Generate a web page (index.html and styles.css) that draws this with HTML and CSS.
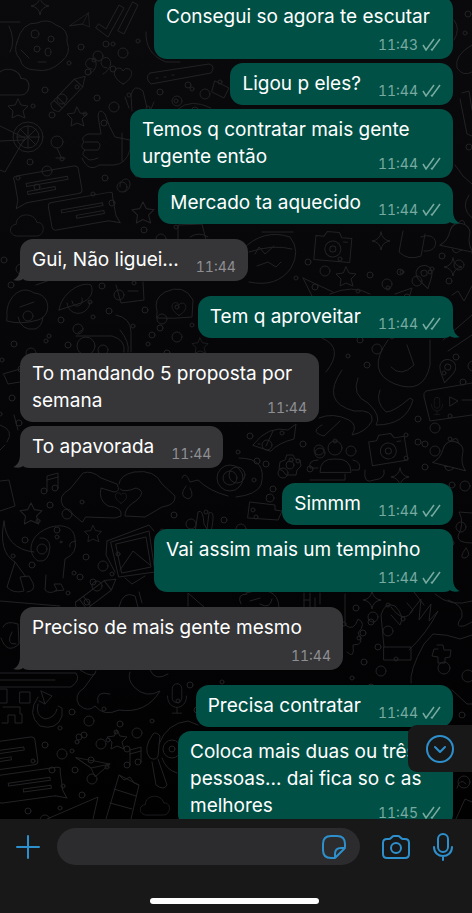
FILE: index.html
```html
<!DOCTYPE html>
<html lang="pt-BR">
<head>
<meta charset="utf-8">
<meta name="viewport" content="width=device-width, initial-scale=1">
<title>Conversa</title>
<link rel="stylesheet" href="styles.css">
</head>
<body>
<svg class="defs" aria-hidden="true">
  <defs>
    <symbol id="ticks" viewBox="0 0 19 13"><path d="M1 7l3 5L12 1M9 11l1 1L18 1"/></symbol>
    <symbol id="tail-out" viewBox="0 0 20 16"><path d="M0 0H13V3C13 9 16 14 20 15C16 16 12 16 10 14C8 16 5 16 0 16Z"/></symbol>
    <symbol id="tail-in" viewBox="0 0 20 16"><path d="M20 0H7V3C7 9 4 14 0 15C4 16 8 16 10 14C12 16 15 16 20 16Z"/></symbol>
    <g id="star"><path d="M0-10L3-4L10-3L5 2L7 9L0 6L-6 9L-5 2L-10-3L-3-4Z"/></g>
    <g id="spark"><path d="M0-9Q1-1 9 0Q1 1 0 9Q-1 1-9 0Q-1-1 0-9Z"/></g>
    <g id="heart"><path d="M0 8C-12 1-10-8-4-8Q-1-8 0-5Q2-9 6-7C12-4 7 5 0 8Z"/></g>
    <g id="cloud"><path d="M-12 10C-22 8-19-3-12-3C-12-16 8-17 11-5C21-6 20 10 11 10Z"/></g>
    <g id="plane"><path d="M-17-8L17 0L2 16L-2 5ZM-2 5L17 0M-2 5L-17-8"/></g>
    <g id="camera"><path d="M-18-10H-10L-7-15H5L8-10H18V14H-18ZM10-6H14"/><circle r="8" cy="2"/><circle r="3" cy="2"/></g>
    <g id="bell"><path d="M-17 12Q-10 6-10-4C-10-17 10-17 10-4Q10 6 17 12ZM-3-14Q0-20 3-14M-5 12Q0 20 5 12"/></g>
    <g id="pin"><path d="M0 12C-4 5-8 1-8-4C-8-14 8-14 8-4C8 1 4 5 0 12Z"/><circle r="3" cy="-4"/></g>
    <g id="note"><path d="M-4 7V-8L7-11V4M-4-4L7-7"/><circle cx="-7" cy="7" r="3"/><circle cx="4" cy="4" r="3"/></g>
    <g id="chat"><path d="M-31-12Q-33-16-28-16H30Q34-16 34-12V8Q34 12 30 12H-23L-34 16L-31 8ZM-20-7H22V-4H-20ZM-20 1H8V4H-20Z"/></g>
    <g id="crayon"><path d="M-6-16L0-26L6-16V20Q0 25-6 20ZM-6-16H6M-6 10H6M-6 15H6"/></g>
    <g id="mic"><rect x="-5" y="-14" width="10" height="20" rx="5"/><path d="M-10-1C-10 15 10 15 10-1M0 11V17M-5 17H5"/></g>
    <g id="drops"><circle r="3"/><circle cx="17" cy="9" r="5"/><circle cx="-12" cy="16" r="2"/><circle cx="7" cy="25" r="3"/><circle cx="32" cy="-3" r="2"/></g>
  </defs>
</svg>

<div class="app">
  <main class="chat">
    <svg class="wallpaper" viewBox="0 0 472 819" preserveAspectRatio="xMidYMid slice" aria-hidden="true">
      <path d="M17 42Q22 22 37 23Q48 18 56 25Q69 29 67 42Q72 53 61 62Q49 73 36 70Q22 70 20 59Q13 52 17 42Z"/>
      <circle cx="35" cy="34" r="4"/><circle cx="51" cy="39" r="3"/><circle cx="37" cy="49" r="3"/><ellipse cx="48" cy="52" rx="3" ry="4"/><path d="M21 50L29 58M38 62H46M0 22H20M9 26Q16 41 10 52"/>
      <path d="M96 28L108 37L124 8L119 5L106 29L99 24ZM118 31L124 34L138 5L133 2Z"/>
      <use href="#plane" transform="translate(81 21) rotate(-48) scale(.65)"/>
      <path d="M92 69C81 68 86 56 93 59C100 63 94 73 88 75M107 68C97 67 101 55 108 58C114 62 109 71 103 74"/>
      <use href="#heart" x="123" y="76"/><use href="#cloud" transform="translate(9 84) scale(1.1)"/>
      <use href="#crayon" transform="translate(68 94) rotate(44) scale(.95)"/>
      <use href="#star" x="18" y="109"/><use href="#star" x="77" y="117"/><use href="#spark" x="40" y="6"/>
      <circle cx="28" cy="137" r="15"/><circle cx="28" cy="137" r="11"/><path d="M17 137H39M28 126V148M20 129L36 145M36 129L20 145M0 126L25 138L5 172L0 170M0 141L24 140"/>
      <circle cx="57" cy="142" r="6"/><path d="M57 148L61 157M56 158H65"/>
      <path d="M82 158C86 168 93 170 99 165H114Q126 164 130 150V140L115 137Q109 127 105 114Q99 107 98 116L101 134H88Q80 137 84 142Q79 147 85 150Q80 155 87 158Q88 162 98 158M85 142H98Q102 145 98 150H85M122 133V161"/>
      <path d="M129 108L125 97M132 111L131 95Q134 83 143 91L147 108M151 109L154 102"/>
      <use href="#chat" transform="translate(47 187) rotate(-10)"/><use href="#chat" transform="translate(84 213) rotate(-10) scale(-1 1)"/>
      <use href="#cloud" transform="translate(27 227) scale(.9)"/><use href="#star" transform="translate(143 213) scale(1.1)"/>
      <path d="M146 32Q145 54 166 62L180 62M150 73L209 64Q216 66 211 73L151 84Q144 78 150 73M156 78H158M164 77H166M172 75H174M215 81L229 88L224 98L212 92ZM178 109Q191 98 211 108"/>
      <path d="M120 187C119 178 130 176 130 184Q130 190 124 192M178 240V225L202 224L206 240M190 237Q199 231 208 237"/>
      <g><use href="#drops" x="81" y="47"/><use href="#drops" x="45" y="90"/><use href="#drops" x="97" y="98"/><use href="#drops" x="160" y="92"/><use href="#drops" x="188" y="85"/><use href="#drops" x="105" y="178"/><use href="#drops" x="106" y="44"/><use href="#drops" x="30" y="162"/><use href="#drops" x="144" y="230"/></g>
      <path d="M454 20Q461 29 454 40M472 45Q454 55 457 68Q463 77 472 72M462 93L469 91L472 110M460 99L467 134L472 136M455 165L463 176L472 184M469 195Q460 208 472 218"/>
      <circle cx="468" cy="14" r="3"/><circle cx="465" cy="33" r="2"/><circle cx="469" cy="147" r="3"/>
      <path d="M242 250Q263 228 290 237Q301 251 291 268Q277 288 249 282M249 252Q273 244 292 249M255 254L259 247L265 254L274 246M257 266L268 262L276 267L281 262"/>
      <use href="#camera" transform="translate(333 247) rotate(5)"/><use href="#spark" x="381" y="241"/><path d="M403 231L399 252Q408 261 421 256L425 234M421 237C439 230 441 253 424 251M262 232H293"/>
      <use href="#bell" transform="translate(459 237) rotate(12)"/><use href="#spark" x="453" y="267"/><use href="#pin" transform="translate(425 277) rotate(-14)"/><use href="#star" x="346" y="277"/>
      <path d="M303 278L333 292M303 278L312 296M330 294Q353 284 370 294M395 294L412 288L409 298M452 295L458 291L464 301L472 286M443 340L472 315M448 351L472 335"/>
      <g><use href="#drops" x="308" y="262"/><use href="#drops" x="370" y="275"/><use href="#drops" x="400" y="272"/><use href="#drops" x="442" y="256"/><use href="#drops" x="360" y="340"/></g>
      <path d="M7 316C5 300 20 283 34 293C51 294 52 316 38 320Q21 325 7 321ZM18 317Q21 331 35 329Q42 327 43 317M59 310C61 294 80 281 91 285C94 292 91 299 81 303L59 310M67 303C69 318 89 316 90 302M72 301C74 310 84 306 82 298M20 307L34 302M36 285L58 277M116 285L121 303L144 300L143 282M128 291H138"/>
      <circle cx="28" cy="316" r="5"/><path d="M76 336H112Q126 340 124 352M82 330L78 333M116 315Q131 318 131 332V352M120 330Q130 342 128 352"/><circle cx="86" cy="346" r="9"/><circle cx="103" cy="350" r="5"/>
      <path d="M157 311Q153 299 165 292Q184 283 193 300L192 317Q174 319 157 318Z"/><use href="#heart" transform="translate(179 309) scale(.8)"/><use href="#star" transform="translate(200 346) scale(.8)"/>
      <g><use href="#drops" x="61" y="320"/><use href="#drops" x="102" y="286"/><use href="#drops" x="145" y="310"/><use href="#drops" x="14" y="344"/><use href="#drops" x="160" y="328"/><use href="#drops" x="4" y="260"/><use href="#drops" x="12" y="398"/></g>
      <path d="M3 374L20 369M4 375L8 384L20 382M14 415L18 430M0 425Q15 430 7 442M0 450L5 445"/>
      <path d="M322 338Q345 348 326 372M342 370Q320 402 354 411Q374 409 372 421Q366 432 352 435Q358 425 349 420Q333 412 319 418M358 378Q351 395 368 403Q382 416 376 425Q406 425 413 400L410 398Q394 412 386 412Q375 402 380 390M388 340Q365 372 395 384Q424 395 430 365V340M391 367Q401 378 414 365L407 345M322 425Q309 432 324 436L340 421"/>
      <use href="#pin" transform="translate(447 371) rotate(12)"/><path d="M472 383L426 391Q423 393 424 397L430 421L472 415M450 397L458 401L450 406ZM462 400H472"/><use href="#mic" transform="translate(437 405) scale(.55)"/>
      <path d="M253 445Q268 425 288 430L296 424L294 439Q278 443 271 451ZM273 431L266 446M258 444H260"/>
      <use href="#camera" transform="translate(388 449) rotate(-9)"/><use href="#bell" transform="translate(452 455) rotate(14)"/>
      <circle cx="335" cy="448" r="7"/><circle cx="319" cy="450" r="5"/><circle cx="351" cy="451" r="5"/><path d="M320 472Q320 458 335 459Q351 458 351 472ZM318 460Q308 460 310 468H318M353 460Q362 462 359 470H352"/>
      <circle cx="290" cy="465" r="4"/><path d="M287 455H293L295 459L300 460L301 466L297 470L296 475L290 475L286 475L283 471L279 469L280 462L285 460Z"/>
      <g><use href="#drops" x="418" y="419"/><use href="#drops" x="250" y="436"/><use href="#drops" x="303" y="444"/><use href="#drops" x="418" y="442"/><use href="#drops" x="456" y="357"/><use href="#drops" x="266" y="464"/></g>
      <path d="M239 458Q268 458 261 485Q256 495 236 497"/><circle cx="237" cy="475" r="8"/><use href="#spark" x="400" y="477"/>
      <path d="M82 522L63 506Q57 496 70 489L83 473Q92 470 101 478L117 484Q121 492 114 492L101 488Q98 500 108 506Q123 507 121 516L115 518L86 517ZM119 484Q120 475 134 472Q155 469 162 484L175 496Q176 505 162 507L145 517L125 516Q124 508 137 500Q147 491 136 488Q124 493 120 489"/><use href="#heart" transform="translate(121 498) scale(.65)"/>
      <use href="#note" x="51" y="484"/><use href="#star" transform="translate(31 514) scale(1.1)"/><use href="#star" transform="translate(93 534) scale(.85)"/><path d="M0 481L9 480L15 506L0 511M182 478Q185 470 190 482L198 480Q209 491 228 496M186 486Q178 496 188 499Q195 497 190 488M193 546L198 512Q203 508 204 524L207 529L209 513Q216 509 211 532"/>
      <circle cx="230" cy="478" r="13"/><circle cx="230" cy="478" r="7"/>
      <path d="M4 521Q-2 552 15 562L7 587Q13 594 24 591L20 577L29 576L33 583Q36 591 27 592M46 575L45 590Q50 595 57 590L54 584L61 584L64 590L55 591M63 578L65 559Q78 553 75 540C75 530 67 523 51 527C29 534 26 553 38 561Q49 563 50 547Q49 537 40 538M15 562L26 577M4 521Q6 549 34 552M76 541Q68 542 70 547"/><circle cx="61" cy="542" r="1"/>
      <path d="M107 541L149 525L154 531M111 542L149 531L155 572L119 577ZM116 544L146 537L151 567L122 573ZM120 570L133 551L150 565M125 578L132 584L145 576M107 541L106 555L115 572"/><use href="#crayon" transform="translate(95 595) rotate(53)"/>
      <path d="M119 607Q123 590 135 596L138 607M139 592L142 603M0 601L60 606M188 606V593L204 607"/>
      <g><use href="#drops" x="25" y="540"/><use href="#drops" x="86" y="557"/><use href="#drops" x="174" y="515"/><use href="#drops" x="80" y="577"/><use href="#drops" x="224" y="520"/><use href="#drops" x="50" y="505"/></g>
      <path d="M250 502L275 505V510L282 511L278 520L248 518ZM310 480H345V474M365 470Q363 485 374 480Q386 479 384 470"/><circle cx="253" cy="510" r="2"/><circle cx="270" cy="498" r="4"/><circle cx="452" cy="485" r="3"/><circle cx="465" cy="486" r="5"/>
      <path d="M472 513L459 512Q465 523 458 536Q457 543 472 543M466 548Q458 559 465 558Q472 556 466 548M435 594Q451 608 472 601M448 600Q464 605 462 617Q453 628 464 626L472 622M241 604Q236 594 247 594M246 593Q278 584 279 607M250 601L260 598M260 604Q270 610 272 599"/>
      <path d="M304 593V607M310 593V607M304 600H310M315 598V607M320 593V604M345 594V625Q354 632 358 619Q367 623 358 633Q366 645 353 645Q355 660 347 652"/><use href="#spark" x="372" y="600"/>
      <path d="M384 647L381 615Q385 601 395 606Q405 616 400 625L391 615M391 607Q404 625 413 610L407 603M410 613L421 599L419 620L431 604L429 621L438 611Q427 633 409 650M384 647H411V660H384ZM414 592L424 605"/>
      <path d="M411 683Q409 671 424 644L433 634Q447 634 460 639L472 635M437 645H443L444 650L451 650L450 657L445 658L445 663H438L438 657L432 656L434 649H438"/><circle cx="444" cy="668" r="6"/><circle cx="468" cy="676" r="6"/>
      <g><use href="#drops" x="356" y="608"/><use href="#drops" x="364" y="662"/><use href="#drops" x="371" y="622"/><use href="#drops" x="444" y="518"/></g>
      <path d="M3 627Q6 620 18 624L19 644Q7 655 1 638M12 632Q5 645 16 644M0 673H76Q81 680 71 687H0M0 680H55M95 673L84 688Q73 695 79 705Q88 713 95 706Q104 717 119 710Q146 714 160 691Q146 699 134 687Q127 679 130 672M98 703Q95 690 110 694M150 670Q155 682 168 674"/>
      <path d="M38 697Q26 714 40 726Q57 731 62 716V708L58 706M41 691L45 704L39 701M38 704Q35 716 45 719Q55 718 57 709M41 691L52 696L45 704M0 689H7V703H0M20 692H30V703H20ZM3 707H20V714H22V723H15V715H8V723H2M80 670Q95 680 96 671"/>
      <use href="#mic" transform="translate(177 697) scale(.95)"/><use href="#star" x="117" y="740"/><use href="#plane" transform="translate(93 764) scale(1 .8)"/><use href="#note" x="134" y="758"/>
      <use href="#chat" transform="translate(3 757) rotate(-8)"/><use href="#chat" transform="translate(31 787) rotate(-8) scale(-1 1)"/>
      <path d="M47 819L98 797L93 819M106 819L119 775L139 785L131 819M114 789L136 796M110 803L132 809M119 775L124 780L130 777L134 783L139 785M153 734Q142 749 150 758Q156 761 158 756L160 736Q156 731 153 734M159 744Q167 723 188 721L198 725M162 758Q166 770 177 773M152 762L156 785Q164 791 167 785L158 759"/>
      <circle cx="172" cy="749" r="9"/><circle cx="172" cy="749" r="3"/><use href="#cloud" transform="translate(155 807) scale(.8)"/>
      <g><use href="#drops" x="72" y="712"/><use href="#drops" x="45" y="745"/><use href="#drops" x="84" y="735"/><use href="#drops" x="120" y="724"/><use href="#drops" x="75" y="770"/><use href="#drops" x="28" y="811"/><use href="#drops" x="190" y="685"/></g>
      <path d="M452 690L467 704L472 704M456 819L465 799L472 802M457 788Q460 777 466 784"/><circle cx="462" cy="715" r="3"/><circle cx="464" cy="782" r="6"/>
    </svg>

    <ol class="thread">
      <li class="row out"><article class="bubble stacked medium"><p>Consegui so agora te escutar</p><footer><time>11:43</time><svg class="ticks"><use href="#ticks"/></svg></footer></article></li>
      <li class="row out"><article class="bubble"><p>Ligou p eles?</p><footer><time>11:44</time><svg class="ticks"><use href="#ticks"/></svg></footer></article></li>
      <li class="row out"><article class="bubble overlap wide"><p>Temos q contratar mais gente<br>urgente então</p><footer><time>11:44</time><svg class="ticks"><use href="#ticks"/></svg></footer></article></li>
      <li class="row out last"><article class="bubble"><p>Mercado ta aquecido</p><footer><time>11:44</time><svg class="ticks"><use href="#ticks"/></svg></footer><svg class="tail"><use href="#tail-out"/></svg></article></li>
      <li class="row in last"><article class="bubble"><p>Gui, Não liguei...</p><footer><time>11:44</time></footer><svg class="tail"><use href="#tail-in"/></svg></article></li>
      <li class="row out last"><article class="bubble"><p>Tem q aproveitar</p><footer><time>11:44</time><svg class="ticks"><use href="#ticks"/></svg></footer><svg class="tail"><use href="#tail-out"/></svg></article></li>
      <li class="row in"><article class="bubble overlap medium"><p>To mandando 5 proposta por<br>semana</p><footer><time>11:44</time></footer></article></li>
      <li class="row in last"><article class="bubble"><p>To apavorada</p><footer><time>11:44</time></footer><svg class="tail"><use href="#tail-in"/></svg></article></li>
      <li class="row out"><article class="bubble"><p>Simmm</p><footer><time>11:44</time><svg class="ticks"><use href="#ticks"/></svg></footer></article></li>
      <li class="row out last"><article class="bubble stacked medium"><p>Vai assim mais um tempinho</p><footer><time>11:44</time><svg class="ticks"><use href="#ticks"/></svg></footer><svg class="tail"><use href="#tail-out"/></svg></article></li>
      <li class="row in last"><article class="bubble stacked wide"><p>Preciso de mais gente mesmo</p><footer><time>11:44</time></footer><svg class="tail"><use href="#tail-in"/></svg></article></li>
      <li class="row out"><article class="bubble"><p>Precisa contratar</p><footer><time>11:44</time><svg class="ticks"><use href="#ticks"/></svg></footer></article></li>
      <li class="row out"><article class="bubble overlap narrow"><p>Coloca mais duas ou três<br>pessoas... dai fica so c as<br>melhores</p><footer><time>11:45</time><svg class="ticks"><use href="#ticks"/></svg></footer></article></li>
    </ol>

    <button class="jump" type="button" aria-label="Ir para o fim">
      <svg viewBox="0 0 30 30"><circle cx="15" cy="15" r="13"/><path d="M10 13l5 5 5-5"/></svg>
    </button>
  </main>

  <form class="composer">
    <div class="bar">
      <button class="add" type="button" aria-label="Anexar"><svg viewBox="0 0 24 24"><path d="M12 1V23M1 12H23"/></svg></button>
      <div class="field">
        <input type="text" aria-label="Mensagem">
        <button class="sticker" type="button" aria-label="Figurinhas"><svg viewBox="0 0 24 24"><path d="M12 23H9Q1 23 1 15V9Q1 1 9 1H15Q23 1 23 9V12Q23 14 21 15L14 22Q13 23 12 23ZM13 23V19Q13 13 19 13H23"/></svg></button>
      </div>
      <button class="photo" type="button" aria-label="Câmera"><svg viewBox="0 0 28 24"><path d="M5 4H7Q8 4 9 3L10 2Q11 1 12 1H16Q17 1 18 2L19 3Q20 4 21 4H23Q27 4 27 8V19Q27 23 23 23H5Q1 23 1 19V8Q1 4 5 4Z"/><circle cx="14" cy="13" r="5"/></svg></button>
      <button class="voice" type="button" aria-label="Gravar áudio"><svg viewBox="0 0 20 28"><rect x="5" y="1" width="10" height="18" rx="5"/><path d="M1 14C1 26 19 26 19 14M10 23V27"/></svg></button>
    </div>
    <div class="home"></div>
  </form>
</div>
</body>
</html>
```
FILE: styles.css
```css
* { box-sizing: border-box; }

body {
  margin: 0;
  background: #181818;
  color: #fff;
  font-family: Inter, "Liberation Sans", sans-serif;
  font-size: 19px;
  line-height: 27px;
}

.defs { position: absolute; width: 0; height: 0; }

.app {
  display: flex;
  flex-direction: column;
  height: 100vh;
}

.chat {
  position: relative;
  flex: 1;
  min-height: 0;
  overflow: hidden;
  background: linear-gradient(#0a0a0d, #050507 55%, #010102);
}

.wallpaper {
  position: absolute;
  inset: 0;
  width: 100%;
  height: 100%;
  fill: none;
  stroke: #222224;
  stroke-width: 1;
  stroke-linecap: round;
  stroke-linejoin: round;
}

.thread {
  position: relative;
  list-style: none;
  margin: -4px 0 0;
  padding: 0 19px 0 20px;
}

.row { display: flex; margin-bottom: 4px; }
.row.last { margin-bottom: 15px; }
.row.out { justify-content: flex-end; }

.bubble {
  position: relative;
  display: flex;
  align-items: flex-end;
  gap: 17px;
  padding: 7px 12px 8px;
  border-radius: 13px;
}

.out .bubble { background: #005046; fill: #005046; }
.in .bubble { background: #363638; fill: #363638; }

.bubble p { margin: 0; white-space: nowrap; }

.bubble footer {
  display: flex;
  align-items: center;
  gap: 4px;
  margin-bottom: -4px;
  color: #8f8f93;
  font-size: 14px;
  font-variant-numeric: tabular-nums;
  line-height: 21px;
}

.out footer { color: #79aaa0; }

.stacked { flex-direction: column; gap: 4px; }
.stacked p { align-self: flex-start; }

.overlap { justify-content: space-between; gap: 0; }
.overlap p { margin-right: -80px; }

.narrow { min-width: 275px; }
.medium { min-width: 299px; }
.wide { min-width: 323px; }

.ticks {
  width: 19px;
  height: 13px;
  fill: none;
  stroke: #79aaa0;
  stroke-width: 1.5;
}

.tail { position: absolute; bottom: 0; width: 20px; height: 16px; }
.out .tail { right: -7px; }
.in .tail { left: -7px; }

button {
  display: flex;
  align-items: center;
  justify-content: center;
  padding: 0;
  border: 0;
  background: none;
}

button svg {
  fill: none;
  stroke: #2d8fcb;
  stroke-width: 2;
  stroke-linecap: round;
  stroke-linejoin: round;
}

.jump {
  position: absolute;
  right: 0;
  bottom: 47px;
  width: 64px;
  height: 47px;
  border-radius: 9px 0 0 9px;
  background: #181818;
}

.jump svg { width: 30px; height: 30px; }

.composer {
  padding: 9px 19px 9px 16px;
  display: flex;
  flex-direction: column;
  gap: 33px;
  background: #181818;
}

.bar { display: flex; align-items: center; }

.add svg { width: 24px; height: 24px; }

.field {
  flex: 1;
  min-width: 0;
  display: flex;
  align-items: center;
  height: 37px;
  margin: 0 22px 0 17px;
  padding: 0 14px 0 16px;
  border-radius: 19px;
  background: #2c2c2e;
}

.field input {
  flex: 1;
  min-width: 0;
  border: 0;
  outline: 0;
  background: none;
  color: #fff;
  font: inherit;
}

.sticker svg { width: 24px; height: 24px; }
.photo svg { width: 28px; height: 24px; }
.voice { margin-left: 23px; }
.voice svg { width: 20px; height: 28px; }

.home {
  align-self: center;
  width: 169px;
  height: 6px;
  border-radius: 3px;
  background: #fff;
}
```
